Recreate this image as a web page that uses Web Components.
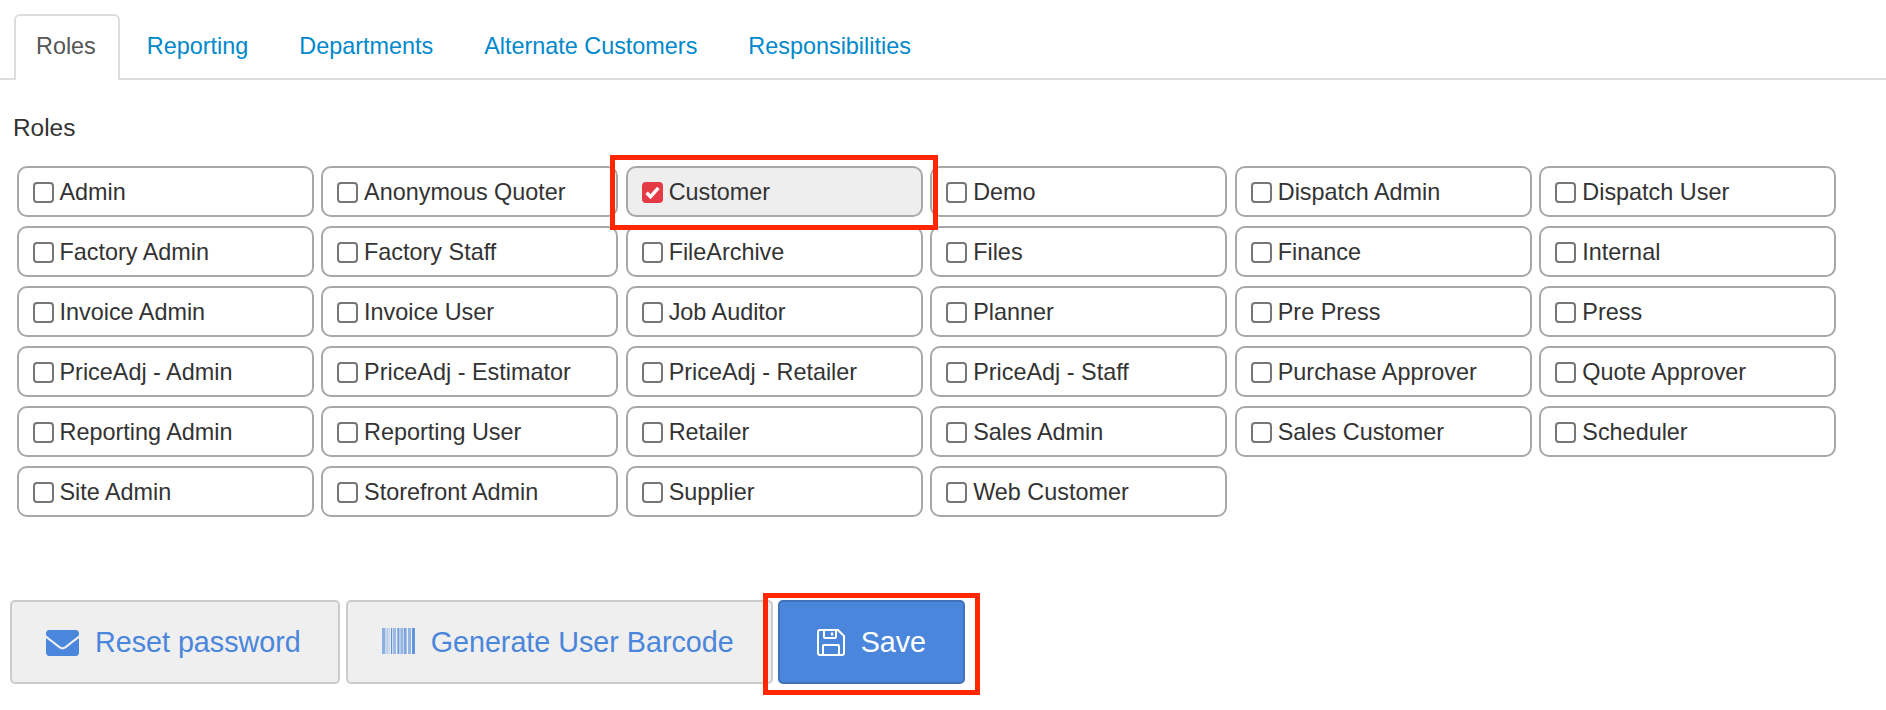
<!DOCTYPE html>
<html>
<head>
<meta charset="utf-8">
<title>Roles</title>
<style>
html, body { margin: 0; background: #fff; }
body { font-family: "Liberation Sans", Arial, sans-serif; color: #333; }
</style>
</head>
<body>

<user-roles-page>
   <tab-bar>
      <tab-item active>Roles</tab-item>
      <tab-item>Reporting</tab-item>
      <tab-item>Departments</tab-item>
      <tab-item>Alternate Customers</tab-item>
      <tab-item>Responsibilities</tab-item>
   </tab-bar>

   <role-grid title-text="Roles">
      <role-item>Admin</role-item>
      <role-item>Anonymous Quoter</role-item>
      <role-item checked marked>Customer</role-item>
      <role-item>Demo</role-item>
      <role-item>Dispatch Admin</role-item>
      <role-item>Dispatch User</role-item>

      <role-item>Factory Admin</role-item>
      <role-item>Factory Staff</role-item>
      <role-item>FileArchive</role-item>
      <role-item>Files</role-item>
      <role-item>Finance</role-item>
      <role-item>Internal</role-item>

      <role-item>Invoice Admin</role-item>
      <role-item>Invoice User</role-item>
      <role-item>Job Auditor</role-item>
      <role-item>Planner</role-item>
      <role-item>Pre Press</role-item>
      <role-item>Press</role-item>

      <role-item>PriceAdj - Admin</role-item>
      <role-item>PriceAdj - Estimator</role-item>
      <role-item>PriceAdj - Retailer</role-item>
      <role-item>PriceAdj - Staff</role-item>
      <role-item>Purchase Approver</role-item>
      <role-item>Quote Approver</role-item>

      <role-item>Reporting Admin</role-item>
      <role-item>Reporting User</role-item>
      <role-item>Retailer</role-item>
      <role-item>Sales Admin</role-item>
      <role-item>Sales Customer</role-item>
      <role-item>Scheduler</role-item>

      <role-item>Site Admin</role-item>
      <role-item>Storefront Admin</role-item>
      <role-item>Supplier</role-item>
      <role-item>Web Customer</role-item>
   </role-grid>

   <action-bar>
      <action-button icon="mail">Reset password</action-button>
      <action-button icon="barcode">Generate User Barcode</action-button>
      <action-button icon="save" primary marked>Save</action-button>
   </action-bar>
</user-roles-page>

<script>
// Page wrapper
class UserRolesPage extends HTMLElement {
   constructor() {
      super();
      this.attachShadow({ mode: 'open' })
      this.shadowRoot.innerHTML = `
      <style>
      :host {
         display: block;
         width: 1886px;
         height: 710px;
         overflow: hidden;
         font-family: "Liberation Sans", Arial, sans-serif;
      }
      </style>
      <slot></slot>`
   }
}

class TabBar extends HTMLElement {
   constructor() {
      super();
      this.attachShadow({ mode: 'open' })
      this.shadowRoot.innerHTML = `
      <style>
      :host {
         display: flex;
         align-items: flex-end;
         gap: 3px;
         box-sizing: border-box;
         height: 80px;
         padding: 14px 0 0 14px;
         border-bottom: 2px solid #ddd;
      }
      </style>
      <slot></slot>`
   }
}

class TabItem extends HTMLElement {
   constructor() {
      super();
      this.attachShadow({ mode: 'open' })
      this.shadowRoot.innerHTML = `
      <style>
      :host {
         display: flex;
         align-items: center;
         box-sizing: border-box;
         height: 66px;
         margin-bottom: -2px;
         padding: 0 22px 4px;
         border: 2px solid transparent;
         border-bottom: 0;
         border-radius: 6px 6px 0 0;
         font-size: 23.4px;
         color: #0088cc;
      }
      :host([active]) {
         padding-left: 20px;
         border-color: #ddd;
         background: #fff;
         color: #555;
      }
      </style>
      <slot></slot>`
   }
}

class RoleGrid extends HTMLElement {
   constructor() {
      super();
      this.attachShadow({ mode: 'open' })
      this.shadowRoot.innerHTML = `
      <style>
      :host {
         display: block;
         padding: 34px 0 0 13px;
      }
      h4 {
         margin: 0 0 24px;
         font-size: 24.4px;
         font-weight: 400;
         line-height: 28px;
         color: #333;
      }
      .grid {
         display: grid;
         grid-template-columns: repeat(6, 1fr);
         grid-auto-rows: 51px;
         gap: 9px 7.4px;
         width: 1820px;
         margin-left: 3.5px;
      }
      </style>
      <h4></h4>
      <div class="grid"><slot></slot></div>`
   }

   connectedCallback() {
      this.shadowRoot.querySelector('h4').textContent = this.getAttribute('title-text') ?? ''
   }
}

class RoleItem extends HTMLElement {
   constructor() {
      super();
      this.attachShadow({ mode: 'open' })
      this.shadowRoot.innerHTML = `
      <style>
      :host {
         position: relative;
         display: flex;
         align-items: center;
         gap: 6px;
         box-sizing: border-box;
         padding: 1px 0 0 14px;
         border: 2px solid #a8a8a8;
         border-radius: 10px;
         background: #fff;
         font-size: 23.4px;
         color: #333;
      }
      :host([checked]) { background: #eee; }
      :host([marked]) { z-index: 1; }
      .box {
         display: block;
         box-sizing: border-box;
         flex: none;
         width: 21px;
         height: 21px;
         border: 2px solid #767676;
         border-radius: 4px;
         background: #fff;
      }
      .box svg { display: none; }
      :host([checked]) .box {
         border-color: #e43a45;
         background: #e43a45;
      }
      :host([checked]) .box svg {
         display: block;
         width: 17px;
         height: 17px;
      }
      /* annotation drawn over the screenshot */
      :host([marked])::after {
         content: "";
         position: absolute;
         left: -18px;
         top: -13px;
         right: -17px;
         bottom: -15px;
         border: 5px solid #ff2600;
         pointer-events: none;
      }
      </style>
      <span class="box"><svg viewBox="0 0 17 17"><path d="M2.6 8.8l3.9 3.9L14.4 3.8" fill="none" stroke="#fff" stroke-width="3.4"/></svg></span>
      <slot></slot>`
   }
}

class ActionBar extends HTMLElement {
   constructor() {
      super();
      this.attachShadow({ mode: 'open' })
      this.shadowRoot.innerHTML = `
      <style>
      :host {
         display: flex;
         gap: 6px;
         margin-top: 83px;
         padding-left: 10px;
      }
      </style>
      <slot></slot>`
   }
}

const ICONS = {
   mail: `<svg style="margin-top:2px" width="33" height="26" viewBox="0 64 512 384" preserveAspectRatio="none" fill="#4a86db"><path d="M502.3 190.8c3.9-3.1 9.7-.2 9.7 4.7V400c0 26.5-21.5 48-48 48H48c-26.5 0-48-21.5-48-48V195.6c0-5 5.7-7.8 9.7-4.7 22.4 17.4 52.1 39.5 154.1 113.6 21.1 15.4 56.7 47.8 92.2 47.6 35.7.3 72-32.8 92.3-47.6 102-74.1 131.6-96.3 154-113.7zM256 320c23.2.4 56.6-29.2 73.4-41.4 132.7-96.3 142.8-104.7 173.4-128.7 5.8-4.5 9.2-11.5 9.2-18.9v-19c0-26.5-21.5-48-48-48H48C21.5 64 0 85.5 0 112v19c0 7.4 3.4 14.3 9.2 18.9 30.6 23.9 40.7 32.4 173.4 128.7 16.8 12.2 50.2 41.8 73.4 41.4z"/></svg>`,
   barcode: `<svg style="margin-bottom:2px" width="33" height="26" viewBox="0 0 33 26" fill="#4a86db">
      <rect x="0" y="0" width="3.4" height="26" opacity=".6"/>
      <rect x="4.6" y="0" width="1" height="26" opacity=".55"/>
      <rect x="6.6" y="0" width="1" height="26" opacity=".4"/>
      <rect x="9" y="0" width="1.2" height="26" opacity=".9"/>
      <rect x="11" y="0" width="3" height="26" opacity=".5"/>
      <rect x="15.4" y="0" width="2" height="26" opacity=".8"/>
      <rect x="18.4" y="0" width="3" height="26" opacity=".55"/>
      <rect x="22" y="0" width="2.6" height="26" opacity=".7"/>
      <rect x="26" y="0" width="3" height="26" opacity=".55"/>
      <rect x="30" y="0" width="3" height="26" opacity=".85"/>
   </svg>`,
   save: `<svg width="28" height="27" viewBox="0 0 28 27" fill="none" stroke="#fff" stroke-width="2">
      <path d="M3 1h18l6 6v17a2 2 0 0 1-2 2H3a2 2 0 0 1-2-2V3a2 2 0 0 1 2-2z"/>
      <path d="M7 1v7a1 1 0 0 0 1 1h10a1 1 0 0 0 1-1V1"/>
      <path d="M15 3.5v3" stroke-width="2.4"/>
      <path d="M6 26V17a1 1 0 0 1 1-1h14a1 1 0 0 1 1 1v9"/>
   </svg>`
}

class ActionButton extends HTMLElement {
   constructor() {
      super();
      this.attachShadow({ mode: 'open' })
      this.shadowRoot.innerHTML = `
      <style>
      :host {
         position: relative;
         display: flex;
         align-items: center;
         gap: 16px;
         box-sizing: border-box;
         height: 84px;
         padding: 0 37px 0 34px;
         border: 2px solid #cccccc;
         border-radius: 5px;
         background: #efefef;
         font-size: 28.7px;
         color: #4a86db;
      }
      :host([primary]) {
         margin-left: -1px;
         padding: 0 37px;
         border-color: #3f72bb;
         background: #4a86db;
         color: #fff;
      }
      .icon { display: flex; flex: none; }
      :host([marked])::after {
         content: "";
         position: absolute;
         left: -17px;
         top: -9px;
         right: -17px;
         bottom: -13px;
         border: 5px solid #ff2600;
         pointer-events: none;
      }
      </style>
      <span class="icon"></span>
      <slot></slot>`
   }

   connectedCallback() {
      this.shadowRoot.querySelector('.icon').innerHTML = ICONS[this.getAttribute('icon')] ?? ''
   }
}

// Register the elements
customElements.define('user-roles-page', UserRolesPage)
customElements.define('tab-bar', TabBar)
customElements.define('tab-item', TabItem)
customElements.define('role-grid', RoleGrid)
customElements.define('role-item', RoleItem)
customElements.define('action-bar', ActionBar)
customElements.define('action-button', ActionButton)
</script>
</body>
</html>
